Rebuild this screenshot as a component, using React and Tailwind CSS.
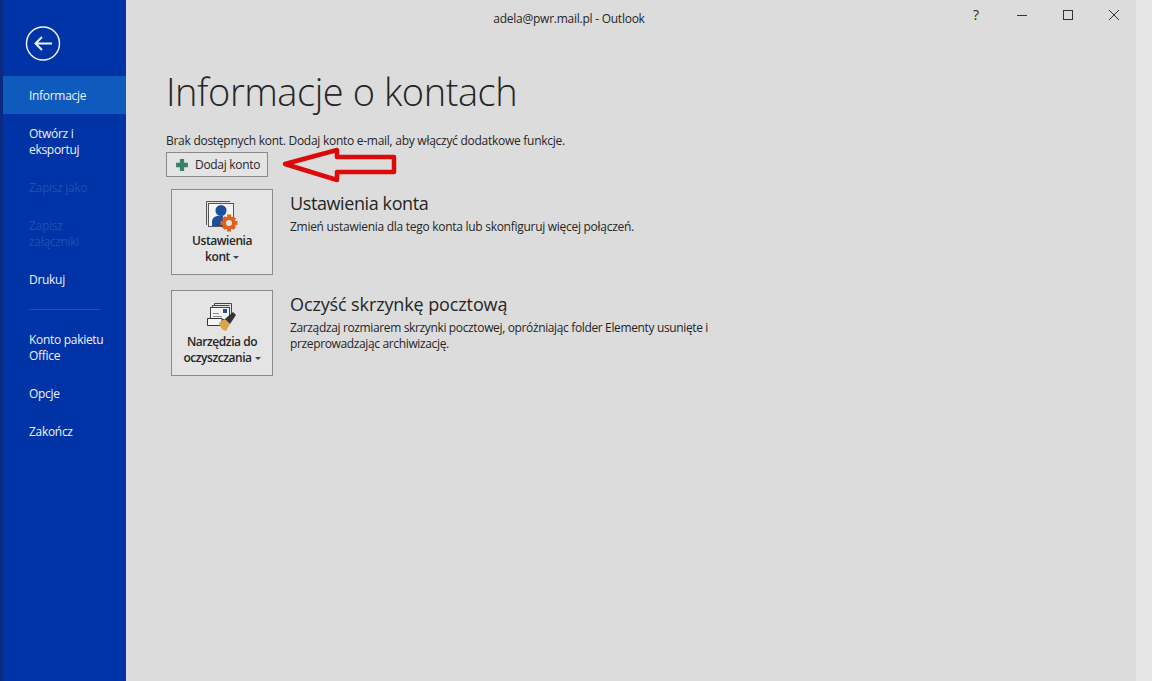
import React from "react";

const font = { fontFamily: '"Open Sans", "Noto Sans", sans-serif' };

function NavItem({ children, active, disabled }) {
  return (
    <div
      className={`px-[26px] pt-[12px] pb-[10px] text-[12px] leading-[16px] tracking-[-0.3px] whitespace-nowrap ${
        active ? "bg-[#0f5abd]" : ""
      } ${disabled ? "text-[#1f50b4]" : "text-[#eef3fb]"}`}
    >
      {children}
    </div>
  );
}

function AccountIcon() {
  return (
    <svg width="34" height="32" viewBox="0 0 34 32">
      <path d="M1.5 25V1.5H25" fill="none" stroke="#555" strokeWidth="1" />
      <rect x="3.5" y="3.5" width="25" height="23" fill="#f4f4f4" stroke="#555" strokeWidth="1" />
      <circle cx="16" cy="10.5" r="5.5" fill="#1d4f9f" />
      <path d="M7 26v-4c0-4 3-6 6-6h5v10z" fill="#1d4f9f" />
      <g fill="#e0611c">
        <circle cx="24" cy="23" r="6.5" />
        <rect x="22" y="14.500" width="4" height="17" />
        <rect x="15.500" y="21" width="17" height="4" />
        <rect x="22" y="15" width="4" height="16" transform="rotate(45 24 23)" />
        <rect x="22" y="15" width="4" height="16" transform="rotate(-45 24 23)" />
      </g>
      <circle cx="24" cy="23" r="3" fill="#e4e4e4" />
    </svg>
  );
}

function CleanupIcon() {
  return (
    <svg width="32" height="30" viewBox="0 0 32 30">
      <path d="M8.500 3V1.500H25.500V13M6.500 5V3.500H23.500" fill="none" stroke="#444" strokeWidth="1" />
      <rect x="4.500" y="5.500" width="19" height="12" fill="#f4f4f4" stroke="#444" />
      <rect x="17" y="7" width="4" height="4" fill="#1d4f9f" />
      <path d="M7 11.500h6M7 14.500h9" stroke="#888" strokeWidth="1" />
      <path d="M1.500 16.500H16V23.500H1.500Z" fill="#f4f4f4" stroke="#333" />
      <path d="M13 21l6-4 5 5-4 7c-3 0-6-4-7-8z" fill="#d8a548" />
      <path d="M19 17l8-7 3 3-6 9z" fill="#333" />
    </svg>
  );
}

function BigButton({ icon, top, bottom }) {
  return (
    <div className="ml-[5px] flex h-[86px] w-[102px] shrink-0 flex-col items-center border border-[#8a8a8a] bg-[#e4e4e4] pt-[10px] text-[12px] leading-[16px] font-semibold text-[#262626]">
      <div className="flex h-[32px] items-center">{icon}</div>
      <div className="mt-[1px] tracking-[-0.45px]">{top}</div>
      <div className="flex items-center gap-[3px] tracking-[-0.45px]">
        {bottom}
        <span className="mt-[1px] h-0 w-0 border-x-[3px] border-t-[3px] border-x-transparent border-t-[#444]"></span>
      </div>
    </div>
  );
}

export default function App() {
  return (
    <div className="flex h-[681px] w-[1152px] overflow-hidden bg-[#dcdcdc]" style={font}>
      {/* Sidebar */}
      <div className="w-[3px] shrink-0 bg-[#0a2a80]"></div>
      <aside className="w-[123px] shrink-0 bg-[#0033a6]">
        <div className="flex h-[76px] items-start pl-[22px] pt-[26px]">
          <svg width="36" height="36" viewBox="0 0 36 36" fill="none" stroke="#eef3fb">
            <circle cx="18" cy="17.500" r="16.500" strokeWidth="1.500" />
            <path d="M27 17.500H11M17 11l-6.500 6.500L17 24" strokeWidth="2" />
          </svg>
        </div>
        <NavItem active>Informacje</NavItem>
        <NavItem>Otwórz i<br />eksportuj</NavItem>
        <NavItem disabled>Zapisz jako</NavItem>
        <NavItem disabled>Zapisz<br />załączniki</NavItem>
        <NavItem>Drukuj</NavItem>
        <div className="flex h-[22px] items-center pl-[26px]">
          <div className="h-px w-[71px] bg-[#1a52b8]"></div>
        </div>
        <NavItem>Konto pakietu<br />Office</NavItem>
        <NavItem>Opcje</NavItem>
        <NavItem>Zakończ</NavItem>
      </aside>

      {/* Main */}
      <main className="relative w-[1010px] shrink-0">
        <header className="flex h-[36px] items-start text-[#262626]">
          <div className="mt-[11px] w-[886px] text-center text-[12px] leading-[16px] tracking-[-0.25px]">adela@pwr.mail.pl - Outlook</div>
          <div className="mt-[9px] flex items-center">
            <span className="ml-[-44px] w-[16px] text-center text-[14px] leading-[12px]">?</span>
            <svg className="ml-[32px]" width="12" height="12" viewBox="0 0 12 12" stroke="#333">
              <path d="M1 6.500h10" />
            </svg>
            <svg className="ml-[34px]" width="12" height="12" viewBox="0 0 12 12" fill="none" stroke="#333">
              <rect x="1.500" y="1.500" width="9" height="9" />
            </svg>
            <svg className="ml-[34px]" width="12" height="12" viewBox="0 0 12 12" fill="none" stroke="#333">
              <path d="M1 1l10 10M11 1L1 11" />
            </svg>
          </div>
        </header>

        <div className="pl-[40px] text-[#262626]">
          <h1 className="mt-[25px] text-[38px] leading-[60px] font-light tracking-[-0.45px]">Informacje o kontach</h1>
          <p className="mt-[12px] text-[12px] leading-[16px] tracking-[-0.27px]">
            Brak dostępnych kont. Dodaj konto e-mail, aby włączyć dodatkowe funkcje.
          </p>
          <div className="mt-[3px] flex h-[25px] w-[102px] items-center border border-[#8a8a8a] bg-[#e4e4e4] pl-[8px] text-[12px] tracking-[-0.3px]">
            <svg width="14" height="14" viewBox="0 0 13 13" fill="#3a8069">
              <path d="M4.500 1h4v3.500H12v4H8.500V12h-4V8.500H1v-4h3.500z" />
            </svg>
            <span className="ml-[6px]">Dodaj konto</span>
          </div>

          <section className="mt-[12px] flex">
            <BigButton icon={<AccountIcon />} top="Ustawienia" bottom="kont" />
            <div className="ml-[17px]">
              <h2 className="mt-[2px] text-[18px] leading-[24px] tracking-[-0.4px]">Ustawienia konta</h2>
              <p className="mt-[4px] text-[12px] leading-[16px] tracking-[-0.28px]">
                Zmień ustawienia dla tego konta lub skonfiguruj więcej połączeń.
              </p>
            </div>
          </section>

          <section className="mt-[15px] flex">
            <BigButton icon={<CleanupIcon />} top="Narzędzia do" bottom="oczyszczania" />
            <div className="ml-[17px] w-[440px]">
              <h2 className="mt-[2px] text-[18px] leading-[24px] tracking-[-0.12px]">Oczyść skrzynkę pocztową</h2>
              <p className="mt-[4px] text-[12px] leading-[16px] tracking-[-0.36px]">
                Zarządzaj rozmiarem skrzynki pocztowej, opróżniając folder Elementy usunięte i przeprowadzając archiwizację.
              </p>
            </div>
          </section>
        </div>

        {/* red annotation arrow */}
        <svg className="absolute left-[154px] top-[146px]" width="122" height="40" viewBox="0 0 122 40" fill="none">
          <path
            d="M5 18L57 4V11H114V26H57V34Z"
            stroke="#dd0a0a"
            strokeWidth="4.500"
            strokeLinejoin="round"
          />
        </svg>
      </main>

      <div className="flex-1 bg-[#e6e6e6]"></div>
    </div>
  );
}
